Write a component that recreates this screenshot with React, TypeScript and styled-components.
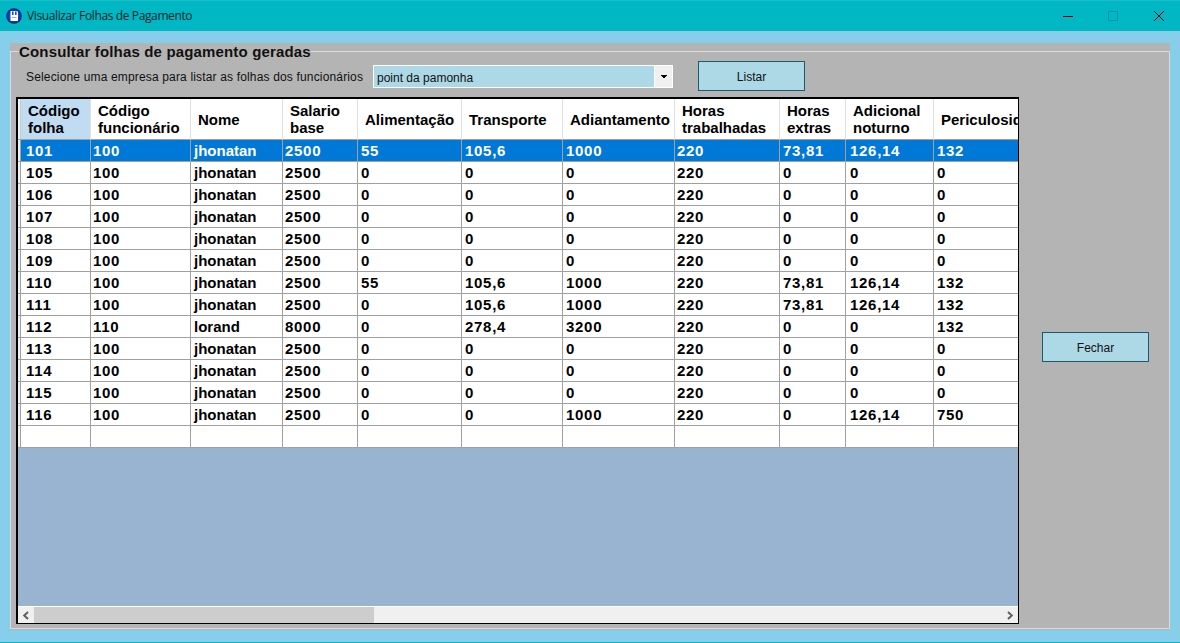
import React from 'react';
import styled, { createGlobalStyle } from 'styled-components';

const COLUMNS = [
  { title: ['Código', 'folha'], width: 70, pad: 5 },
  { title: ['Código', 'funcionário'], width: 100, pad: 2 },
  { title: ['Nome'], width: 92, pad: 3, text: true },
  { title: ['Salario', 'base'], width: 75, pad: 2 },
  { title: ['Alimentação'], width: 104, pad: 3 },
  { title: ['Transporte'], width: 101, pad: 3 },
  { title: ['Adiantamento'], width: 112, pad: 3 },
  { title: ['Horas', 'trabalhadas'], width: 105, pad: 2 },
  { title: ['Horas', 'extras'], width: 66, pad: 3 },
  { title: ['Adicional', 'noturno'], width: 88, pad: 4 },
  { title: ['Periculosidade'], width: 120, pad: 3 },
];

const jh = (code: string, rest: string[]) => [code, '100', 'jhonatan', '2500', ...rest];
const ZERO = ['0', '0', '0', '220', '0', '0', '0'];

const ROWS: string[][] = [
  jh('101', ['55', '105,6', '1000', '220', '73,81', '126,14', '132']),
  jh('105', ZERO),
  jh('106', ZERO),
  jh('107', ZERO),
  jh('108', ZERO),
  jh('109', ZERO),
  jh('110', ['55', '105,6', '1000', '220', '73,81', '126,14', '132']),
  jh('111', ['0', '105,6', '1000', '220', '73,81', '126,14', '132']),
  ['112', '110', 'lorand', '8000', '0', '278,4', '3200', '220', '0', '0', '132'],
  jh('113', ZERO),
  jh('114', ZERO),
  jh('115', ZERO),
  jh('116', ['0', '0', '1000', '220', '0', '126,14', '750']),
  ['', '', '', '', '', '', '', '', '', '', ''],
];

const App: React.FC = () => {
  return (
    <Window>
      <GlobalStyle />
      <TitleBar>
        <AppIcon />
        <TitleText>Visualizar Folhas de Pagamento</TitleText>
        <Controls>
          <ControlButton $width={44} aria-label="Minimizar">
            <svg width="12" height="12" viewBox="0 0 12 12">
              <path d="M1 6.5h10" stroke="#000" strokeWidth="1" />
            </svg>
          </ControlButton>
          <ControlButton $width={46} aria-label="Maximizar">
            <svg width="12" height="12" viewBox="0 0 12 12">
              <rect x="1.5" y="1.5" width="9" height="9" fill="none" stroke="#0a93a3" strokeWidth="1" />
            </svg>
          </ControlButton>
          <ControlButton $width={46} aria-label="Fechar">
            <svg width="12" height="12" viewBox="0 0 12 12">
              <path d="M1 1l10 10M11 1L1 11" stroke="#000" strokeWidth="1" />
            </svg>
          </ControlButton>
        </Controls>
      </TitleBar>

      <Panel>
        <Group>
          <GroupTitle>Consultar folhas de pagamento geradas</GroupTitle>
          <Toolbar>
            <FilterLabel>Selecione uma empresa para listar as folhas dos funcionários</FilterLabel>
            <Combo>
              <ComboValue>point da pamonha</ComboValue>
              <ComboArrow>
                <svg width="6" height="4" viewBox="0 0 6 4">
                  <path d="M0 0h6v1H5v1H4v1H2V2H1V1H0z" fill="#000" />
                </svg>
              </ComboArrow>
            </Combo>
            <ListButton>Listar</ListButton>
          </Toolbar>

          <MainRow>
            <Grid>
              <GridBody>
                <Table>
                  <colgroup>
                    <col style={{ width: 3 }} />
                    {COLUMNS.map((c) => (
                      <col key={c.title.join()} style={{ width: c.width }} />
                    ))}
                  </colgroup>
                  <thead>
                    <tr>
                      <CornerCell />
                      {COLUMNS.map((c, i) => (
                        <HeadCell key={c.title.join()} $active={i === 0}>
                          {c.title.map((line) => (
                            <div key={line}>{line}</div>
                          ))}
                        </HeadCell>
                      ))}
                    </tr>
                  </thead>
                  <tbody>
                    {ROWS.map((row, r) => (
                      <tr key={r}>
                        <MarkCell />
                        {row.map((value, i) => (
                          <Cell key={i} $selected={r === 0} $pad={COLUMNS[i].pad} $text={COLUMNS[i].text}>
                            {value}
                          </Cell>
                        ))}
                      </tr>
                    ))}
                  </tbody>
                </Table>
              </GridBody>
              <ScrollBar>
                <ScrollButton>
                  <svg width="8" height="9" viewBox="0 0 8 9">
                    <path d="M6 1L2.2 4.5 6 8" fill="none" stroke="#606060" strokeWidth="2" />
                  </svg>
                </ScrollButton>
                <ScrollThumb />
                <ScrollButton>
                  <svg width="8" height="9" viewBox="0 0 8 9">
                    <path d="M2 1l3.8 3.5L2 8" fill="none" stroke="#606060" strokeWidth="2" />
                  </svg>
                </ScrollButton>
              </ScrollBar>
            </Grid>
            <Side>
              <CloseButton>Fechar</CloseButton>
            </Side>
          </MainRow>
        </Group>
      </Panel>
    </Window>
  );
};

const AppIcon: React.FC = () => (
  <IconSvg width="16" height="16" viewBox="0 0 16 16">
    <defs>
      <radialGradient id="appIconFill" cx="50%" cy="50%" r="50%">
        <stop offset="0%" stopColor="#2f7bff" />
        <stop offset="70%" stopColor="#0b3fc4" />
        <stop offset="100%" stopColor="#0a2266" />
      </radialGradient>
    </defs>
    <circle cx="8" cy="8" r="7.8" fill="url(#appIconFill)" />
    <path d="M4.5 3h6.5l1 1v9H4.5z" fill="#fff" />
    <rect x="6" y="3.5" width="1.6" height="3.5" fill="#1450cc" />
    <rect x="9" y="3.5" width="1.6" height="3.5" fill="#1450cc" />
    <rect x="6" y="9" width="4.5" height="1" fill="#8fb0ee" />
  </IconSvg>
);

const GlobalStyle = createGlobalStyle`
  html, body {
    margin: 0;
    padding: 0;
    height: 100%;
    overflow: hidden;
  }
  body {
    font-family: "Liberation Sans", Arial, sans-serif;
    color: #000;
  }
`;

const Window = styled.div`
  height: 100vh;
  box-sizing: border-box;
  display: flex;
  flex-direction: column;
  background: #87ceeb;
  border-bottom: 1px solid #00b7c3;
  overflow: hidden;
`;

const TitleBar = styled.header`
  height: 31px;
  flex: none;
  box-sizing: border-box;
  display: flex;
  align-items: center;
  padding-left: 6px;
  background: #00b7c3;
  border-top: 1px solid #18bfca;
`;

const IconSvg = styled.svg`
  flex: none;
  margin-top: -1px;
`;

const TitleText = styled.span`
  margin-left: 5px;
  margin-top: -1px;
  font-family: "Open Sans", "Noto Sans", sans-serif;
  font-size: 12px;
  letter-spacing: -0.38px;
  color: #062428;
`;

const Controls = styled.div`
  margin-left: auto;
  margin-right: -2px;
  display: flex;
`;

const ControlButton = styled.div<{ $width: number }>`
  width: ${(p) => p.$width}px;
  height: 30px;
  display: flex;
  align-items: center;
  justify-content: center;
`;

const Panel = styled.main`
  flex: 1;
  min-height: 0;
  margin: 12px 10px 12px;
  background: #b4b4b4;
  padding-bottom: 1px;
  display: flex;
`;

const Group = styled.fieldset`
  flex: 1;
  min-width: 0;
  margin: 0;
  padding: 2px 0 0 5px;
  border: 1px solid #dcdcdc;
`;

/* the title sits over the frame line, a little below its middle */
const GroupTitle = styled.legend`
  position: relative;
  top: 1px;
  margin-left: 3px;
  padding: 0;
  font-size: 15px;
  font-weight: bold;
  line-height: 16px;
  letter-spacing: 0.16px;
  color: #111;
`;

const Toolbar = styled.div`
  height: 30px;
  display: flex;
  align-items: center;
  padding-left: 10px;
`;

const FilterLabel = styled.span`
  width: 347px;
  flex: none;
  padding-top: 2px;
  font-size: 12px;
  letter-spacing: 0.16px;
  color: #111;
`;

const Combo = styled.div`
  width: 300px;
  height: 23px;
  box-sizing: border-box;
  margin-top: 1px;
  display: flex;
  border: 1px solid #fff;
  background: #add8e6;
`;

const ComboValue = styled.span`
  flex: 1;
  padding-left: 3px;
  font-size: 12px;
  line-height: 24px;
  color: #111;
`;

const ComboArrow = styled.span`
  width: 17px;
  display: flex;
  align-items: center;
  justify-content: center;
  background: #f0f0f0;
  border-left: 1px solid #fff;
`;

const FlatButton = styled.div`
  box-sizing: border-box;
  width: 107px;
  height: 30px;
  padding-top: 1px;
  display: flex;
  align-items: center;
  justify-content: center;
  background: #add8e6;
  border: 1px solid #1c5a6e;
  font-size: 12px;
  color: #111;
`;

const ListButton = styled(FlatButton)`
  margin-left: 25px;
`;

const CloseButton = styled(FlatButton)``;

const MainRow = styled.div`
  margin-top: 6px;
  display: flex;
`;

const Grid = styled.section`
  width: 1003px;
  height: 527px;
  flex: none;
  box-sizing: border-box;
  display: flex;
  flex-direction: column;
  border: 2px solid #000;
  border-right-width: 1px;
  border-bottom-width: 1px;
  background: #99b4d1;
`;

const GridBody = styled.div`
  flex: 1;
  min-height: 0;
  overflow: hidden;
`;

const Table = styled.table`
  width: 1036px;
  table-layout: fixed;
  border-collapse: separate;
  border-spacing: 0;
  font-size: 15px;
  font-weight: bold;
  color: #000;
`;

const CornerCell = styled.th`
  padding: 0;
  background: #f0f0f0;
  border-right: 1px solid #c8c8c8;
  border-bottom: 1px solid #a0a0a0;
`;

const MarkCell = styled.td`
  padding: 0;
  background: #f0f0f0;
  border-right: 1px solid #a0a0a0;
  border-bottom: 1px solid #a0a0a0;
`;

const HeadCell = styled.th<{ $active?: boolean }>`
  height: 40px;
  padding: 0 0 0 7px;
  overflow: hidden;
  white-space: nowrap;
  text-align: left;
  font-weight: bold;
  line-height: 17px;
  background: ${(p) => (p.$active ? '#bfdcf3' : '#fff')};
  border-right: 1px solid #e0e0e0;
  border-bottom: 1px solid #a0a0a0;
`;

const Cell = styled.td<{ $selected?: boolean; $pad: number; $text?: boolean }>`
  height: 21px;
  padding: 0 0 0 ${(p) => p.$pad}px;
  overflow: hidden;
  white-space: nowrap;
  line-height: 21px;
  letter-spacing: ${(p) => (p.$text ? '0' : '0.7px')};
  background: ${(p) => (p.$selected ? '#0078d7' : '#fff')};
  color: ${(p) => (p.$selected ? '#fff' : '#000')};
  border-right: 1px solid #a0a0a0;
  border-bottom: 1px solid #a0a0a0;
`;

const ScrollBar = styled.div`
  height: 17px;
  flex: none;
  box-sizing: border-box;
  display: flex;
  background: #f0f0f0;
  border-top: 1px solid #fff;
`;

const ScrollButton = styled.div`
  width: 16px;
  display: flex;
  align-items: center;
  justify-content: center;
  &:last-child {
    margin-left: auto;
  }
`;

const ScrollThumb = styled.div`
  width: 340px;
  background: #cdcdcd;
`;

const Side = styled.aside`
  padding: 235px 0 0 23px;
`;

export default App;
